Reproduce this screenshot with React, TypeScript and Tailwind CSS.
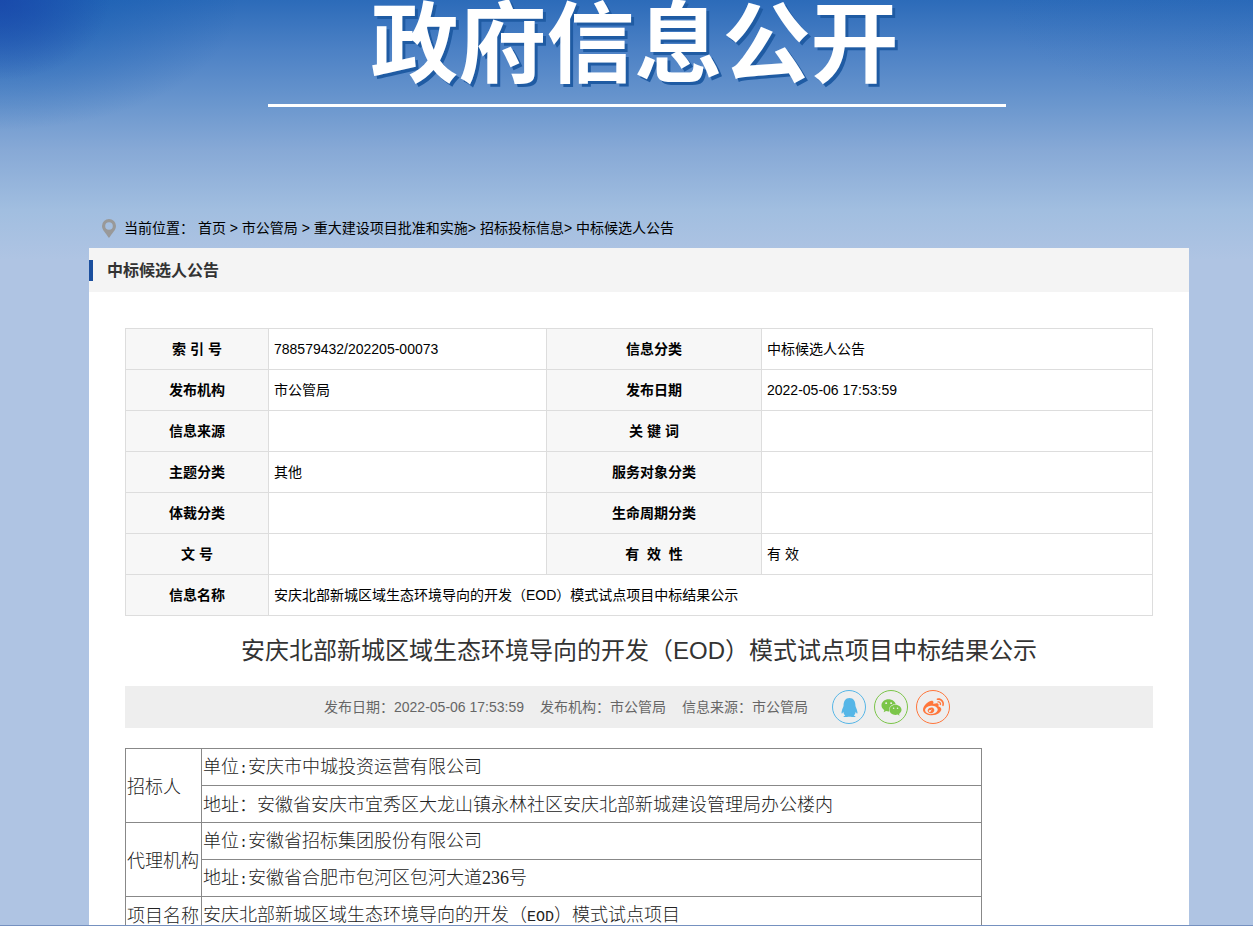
import type { ReactNode } from 'react';
import { FaQq, FaWeibo, FaWeixin } from 'react-icons/fa';

interface InfoRow {
  label: string;
  value: string;
  label2: string;
  value2: string;
}

const PROJECT_TITLE = '安庆北部新城区域生态环境导向的开发（EOD）模式试点项目中标结果公示';

const infoRows: InfoRow[] = [
  { label: '索 引 号', value: '788579432/202205-00073', label2: '信息分类', value2: '中标候选人公告' },
  { label: '发布机构', value: '市公管局', label2: '发布日期', value2: '2022-05-06 17:53:59' },
  { label: '信息来源', value: '', label2: '关 键 词', value2: '' },
  { label: '主题分类', value: '其他', label2: '服务对象分类', value2: '' },
  { label: '体裁分类', value: '', label2: '生命周期分类', value2: '' },
  { label: '文 号', value: '', label2: '有\u00a0 效\u00a0 性', value2: '有 效' },
];

function Half({ children }: { children: ReactNode }) {
  return <span className="font-['Liberation_Mono'] text-[15px]">{children}</span>;
}

function Banner() {
  return (
    <header className="flex flex-col items-center pl-5">
      <h1 className="h-[107px] w-[738px] max-w-full border-b-[3px] border-white pr-1 text-center text-[88px] leading-[90px] font-bold whitespace-nowrap text-white [text-shadow:3px_3px_0_#1f5ba3]">
        政府信息公开
      </h1>
    </header>
  );
}

function Breadcrumb() {
  return (
    <nav aria-label="当前位置" className="mt-[101px] flex h-10 items-center gap-2 pl-[13px] text-sm text-black">
      <svg viewBox="0 0 14 19" className="h-[19px] w-[14px] shrink-0" fill="#999" fillRule="evenodd">
        <path d="M7 0a7 7 0 0 0-7 7c0 4 4.2 7.600 7 12 2.800-4.400 7-8 7-12a7 7 0 0 0-7-7zm0 3.200a3.800 3.800 0 1 1 0 7.600 3.800 3.800 0 0 1 0-7.600z" />
      </svg>
      <p className="whitespace-nowrap">
        当前位置： <a href="#home">首页</a> &gt; <a href="#bureau">市公管局</a> &gt;{' '}
        <a href="#projects">重大建设项目批准和实施</a>&gt; <a href="#bidding">招标投标信息</a>&gt;{' '}
        <a href="#candidates">中标候选人公告</a>
      </p>
    </nav>
  );
}

function InfoTable() {
  const th = 'h-[41px] border border-[#ddd] bg-[#f7f7f7] text-center font-bold';
  const td = 'h-[41px] border border-[#ddd] px-[5px]';

  return (
    <table className="w-full table-fixed border-collapse text-sm text-black">
      <colgroup>
        <col className="w-[143px]" />
        <col className="w-[278px]" />
        <col className="w-[215px]" />
        <col />
      </colgroup>
      <tbody>
        {infoRows.map((row) => (
          <tr key={row.label}>
            <th scope="row" className={th}>{row.label}</th>
            <td className={td}>{row.value}</td>
            <th scope="row" className={th}>{row.label2}</th>
            <td className={td}>{row.value2}</td>
          </tr>
        ))}
        <tr>
          <th scope="row" className={th}>信息名称</th>
          <td colSpan={3} className={td}>{PROJECT_TITLE}</td>
        </tr>
      </tbody>
    </table>
  );
}

function ShareButtons() {
  const base = 'flex size-[34px] items-center justify-center rounded-full border';

  return (
    <div className="flex gap-2">
      <button type="button" aria-label="QQ" className={`${base} border-[#56b6e7] text-[#56b6e7]`}>
        <FaQq size={19} />
      </button>
      <button type="button" aria-label="微信" className={`${base} border-[#7bc549] text-[#7bc549]`}>
        <FaWeixin size={21} />
      </button>
      <button type="button" aria-label="微博" className={`${base} border-[#ff763b] text-[#ff763b]`}>
        <FaWeibo size={21} />
      </button>
    </div>
  );
}

function BidTable() {
  const cell = 'h-[37px] border border-[#888] px-px pt-0.5';

  return (
    <table className="mt-5 w-[857px] table-fixed border-collapse font-['Liberation_Serif','Noto_Sans_CJK_SC',serif] text-lg leading-6 font-light whitespace-nowrap text-[#222]">
      <colgroup>
        <col className="w-[76px]" />
        <col />
      </colgroup>
      <tbody>
        <tr>
          <td rowSpan={2} className={cell}>招标人</td>
          <td className={cell}>单位<Half>:</Half>安庆市中城投资运营有限公司</td>
        </tr>
        <tr>
          <td className={cell}>地址：安徽省安庆市宜秀区大龙山镇永林社区安庆北部新城建设管理局办公楼内</td>
        </tr>
        <tr>
          <td rowSpan={2} className={cell}>代理机构</td>
          <td className={cell}>单位<Half>:</Half>安徽省招标集团股份有限公司</td>
        </tr>
        <tr>
          <td className={cell}>地址<Half>:</Half>安徽省合肥市包河区包河大道236号</td>
        </tr>
        <tr>
          <td className={cell}>项目名称</td>
          <td className={cell}>安庆北部新城区域生态环境导向的开发（<Half>EOD</Half>）模式试点项目</td>
        </tr>
      </tbody>
    </table>
  );
}

export default function App() {
  return (
    <div className="flex h-screen flex-col overflow-hidden border-b border-[#7591c0] bg-[#afc4e3] bg-[radial-gradient(ellipse_110px_80px_at_0_0,rgba(26,66,168,0.7),rgba(26,66,168,0)),radial-gradient(ellipse_240px_130px_at_0_0,rgba(16,88,176,0.7),rgba(16,88,176,0)),radial-gradient(ellipse_260px_110px_at_100%_0,rgba(30,95,180,0.15),rgba(30,95,180,0)),linear-gradient(to_bottom,#2c6bb9_0,#4c81c5_50px,#6b97ce_105px,#87a9d6_150px,#a1bee0_210px,#afc4e3_260px)] font-['Liberation_Sans','Noto_Sans_CJK_SC',sans-serif]">
      <Banner />
      <div className="flex min-h-0 flex-1 flex-col pr-16 pl-[89px]">
        <Breadcrumb />
        <main className="min-h-0 flex-1 overflow-hidden bg-white">
          <div className="flex h-11 items-center bg-[#f4f4f4]">
            <h2 className="border-l-4 border-[#1b4f9e] pl-[14px] text-base leading-[21px] font-bold text-[#333]">
              中标候选人公告
            </h2>
          </div>
          <div className="px-9 pt-9">
            <InfoTable />
            <h3 className="text-center text-2xl leading-[70px] text-[#333]">{PROJECT_TITLE}</h3>
            <div className="flex h-[42px] items-center justify-center gap-4 bg-[#eee] pr-1 text-sm text-[#666]">
              <span>发布日期：2022-05-06 17:53:59</span>
              <span>发布机构：市公管局</span>
              <span className="mr-2">信息来源：市公管局</span>
              <ShareButtons />
            </div>
            <BidTable />
          </div>
        </main>
      </div>
    </div>
  );
}
